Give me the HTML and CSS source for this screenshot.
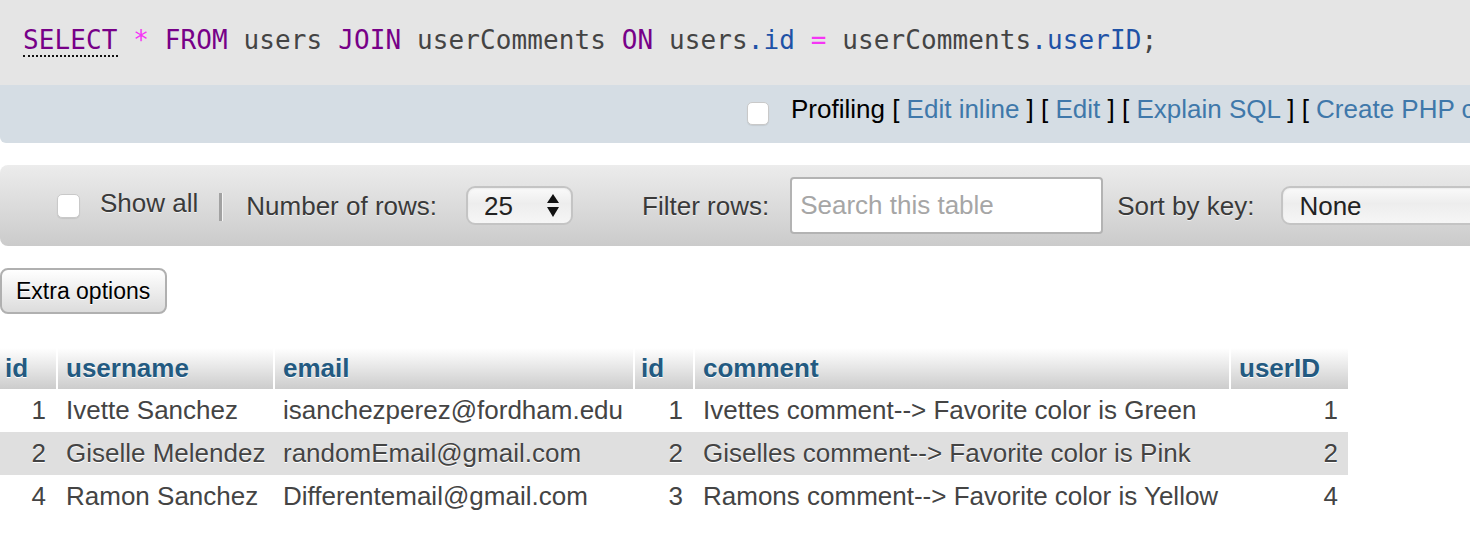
FILE: index.html
```html
<!DOCTYPE html>
<html>
<head>
<meta charset="utf-8">
<title>SQL result</title>
<link rel="stylesheet" href="styles.css">
</head>
<body>
<div class="result">
  <div class="sql"><code><span class="kw sel">SELECT</span> <span class="op">*</span> <span class="kw">FROM</span> users <span class="kw">JOIN</span> userComments <span class="kw">ON</span> users<span class="var">.id</span> <span class="op">=</span> userComments<span class="var">.userID</span>;</code></div>
  <div class="tools">
    <span class="cb tools-cb"></span>
    <span class="links">Profiling [ <a>Edit inline</a> ] [ <a>Edit</a> ] [ <a>Explain SQL</a> ] [ <a>Create PHP code</a></span>
  </div>
</div>

<div class="navigation">
  <span class="cb nav-cb"></span>
  <span class="lbl showall">Show all</span>
  <span class="sep"></span>
  <span class="lbl numrows">Number of rows:</span>
  <div class="select rows-select">
    <span>25</span>
    <svg class="arrows" width="12" height="24" viewBox="0 0 12 24"><polygon points="0,9 6,0 12,9" fill="#111"/><polygon points="0,13 12,13 6,23" fill="#111"/></svg>
  </div>
  <span class="lbl filter">Filter rows:</span>
  <div class="search">Search this table</div>
  <span class="lbl sortkey">Sort by key:</span>
  <div class="select key-select"><span>None</span></div>
</div>

<button class="extra">Extra options</button>

<table class="data">
  <thead>
    <tr>
      <th class="c1">id</th>
      <th class="c2">username</th>
      <th class="c3">email</th>
      <th class="c4">id</th>
      <th class="c5">comment</th>
      <th class="c6">userID</th>
    </tr>
  </thead>
  <tbody>
    <tr>
      <td class="num">1</td>
      <td>Ivette Sanchez</td>
      <td>isanchezperez@fordham.edu</td>
      <td class="num">1</td>
      <td>Ivettes comment--&gt; Favorite color is Green</td>
      <td class="num last">1</td>
    </tr>
    <tr class="even">
      <td class="num">2</td>
      <td>Giselle Melendez</td>
      <td>randomEmail@gmail.com</td>
      <td class="num">2</td>
      <td>Giselles comment--&gt; Favorite color is Pink</td>
      <td class="num last">2</td>
    </tr>
    <tr>
      <td class="num">4</td>
      <td>Ramon Sanchez</td>
      <td>Differentemail@gmail.com</td>
      <td class="num">3</td>
      <td>Ramons comment--&gt; Favorite color is Yellow</td>
      <td class="num last">4</td>
    </tr>
  </tbody>
</table>
</body>
</html>
```

FILE: styles.css
```css
html, body {
  margin: 0;
  padding: 0;
  overflow: hidden;
  background: #fff;
}
body {
  width: 1470px;
  height: 540px;
  font-family: "Liberation Sans", Arial, sans-serif;
  font-size: 26px;
  color: #444;
}

/* SQL result box */
.result {
  border-radius: 0 0 0 6px;
  overflow: hidden;
}
.sql {
  background: #e5e5e5;
  height: 85px;
  box-sizing: border-box;
  padding: 25px 0 0 23px;
  white-space: nowrap;
}
.sql code {
  font-family: "DejaVu Sans Mono", monospace;
  font-size: 26px;
  line-height: 30px;
  letter-spacing: 0.1px;
  color: #444;
}
.kw { color: #770088; }
.sel { border-bottom: 2px dotted #111; }
.op { color: #f535f5; }
.var { color: #1f52a6; }

.tools {
  background: #d5dde4;
  height: 58px;
  box-sizing: border-box;
  padding: 9px 0 0 747px;
  display: flex;
  align-items: flex-start;
  white-space: nowrap;
}
.cb {
  display: inline-block;
  flex-shrink: 0;
  width: 22px;
  height: 23px;
  box-sizing: border-box;
  background: #fff;
  border: 1px solid #c9c9c9;
  border-radius: 5px;
  box-shadow: 0 1px 1px rgba(0,0,0,0.08);
}
.tools-cb { margin-top: 8px; margin-right: 22px; }
.links {
  color: #000;
  line-height: 30px;
}
.links a { color: #3f78aa; text-decoration: none; }

/* navigation bar */
.navigation {
  margin-top: 22px;
  height: 81px;
  box-sizing: border-box;
  background: linear-gradient(#ececec, #cbcbcb);
  border-radius: 8px 0 0 8px;
  display: flex;
  align-items: center;
  padding-left: 57px;
  white-space: nowrap;
}
.navigation > * { flex-shrink: 0; }
.nav-cb { width: 23px; height: 24px; margin-right: 20px; }
.lbl {
  color: #3a3a3a;
  line-height: 30px;
  text-shadow: 0 1px 0 rgba(255,255,255,0.6);
}
.showall { margin-bottom: 5px; }
.sep {
  width: 3px;
  height: 28px;
  background: #a2a2a2;
  box-shadow: 1px 0 0 #f4f4f4;
  margin: 2px 24px 0 21px;
}
.numrows { margin-right: 29px; }
.select {
  box-sizing: border-box;
  height: 39px;
  border: 2px solid #c4c4c4;
  border-radius: 9px;
  background: linear-gradient(#fafafa, #ededed 45%, #f6f6f6);
  box-shadow: inset 0 1px 2px rgba(0,0,0,0.06);
  display: flex;
  align-items: center;
  color: #222;
  line-height: 30px;
}
.rows-select {
  width: 107px;
  padding-left: 16px;
  margin-right: 69px;
}
.rows-select span { flex: 1; }
.arrows { margin-right: 12px; }
.filter { margin-right: 21px; }
.search {
  box-sizing: border-box;
  width: 313px;
  height: 57px;
  border: 2px solid #b3b3b3;
  border-radius: 4px;
  background: #fff;
  padding-left: 8px;
  color: #a6a6a6;
  line-height: 53px;
  margin-right: 14px;
}
.sortkey { margin-right: 27px; }
.key-select {
  width: 340px;
  padding-left: 16px;
}

/* extra options */
.extra {
  display: block;
  margin: 22px 0 0 0;
  width: 167px;
  height: 46px;
  box-sizing: border-box;
  border: 2px solid #b0b0b0;
  border-radius: 8px;
  background: linear-gradient(#ffffff, #dcdcdc);
  font-family: "Liberation Sans", Arial, sans-serif;
  font-size: 23px;
  color: #000;
  text-shadow: 0 1px 0 #fff;
  padding: 0 14px;
  text-align: left;
}

/* data table */
.data {
  margin-top: 34px;
  border-collapse: separate;
  border-spacing: 0;
  table-layout: fixed;
  width: 1348px;
}
.data th, .data td { box-sizing: border-box; }
.data th {
  background: linear-gradient(#ffffff, #cccccc);
  color: #235a81;
  font-weight: bold;
  text-align: left;
  text-shadow: 0 1px 0 #fff;
  padding: 5px 8px;
  line-height: 31px;
  border-right: 2px solid #fff;
}
.data th.c1 { width: 58px; padding-left: 5px; }
.data th.c2 { width: 217px; }
.data th.c3 { width: 360px; }
.data th.c4 { width: 60px; padding-left: 6px; }
.data th.c5 { width: 536px; }
.data th.c6 { width: 117px; border-right: 0; }
.data td {
  padding: 6px 8px;
  line-height: 31px;
  color: #444;
  text-shadow: 0 1px 0 #fff;
  white-space: nowrap;
}
.data td.num { text-align: right; padding-right: 12px; }
.data td.last { padding-right: 10px; }
.data tr.even td { background: #dfdfdf; }
```
